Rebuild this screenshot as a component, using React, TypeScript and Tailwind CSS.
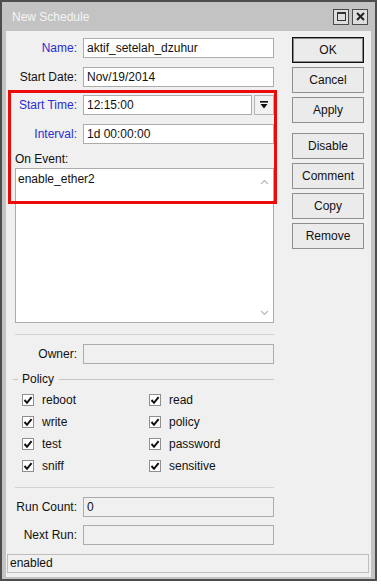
import React from 'react';

const font = { fontFamily: '"Liberation Sans", Arial, sans-serif' };

const Field = ({ label, value, blue, disabled, dropdown, className }: any) => {
  return (
    <div className={`flex items-center h-[20px] ${className || ''}`}>
      <div
        className={`w-[71px] text-right text-[12px] leading-[14px] ${
          blue ? 'text-[#2c2ccf]' : 'text-[#111]'
        }`}
      >
        {label}
      </div>
      <div className="ml-[6px] flex h-[20px]">
        <div
          className={`h-[20px] border border-[#acacac] pl-[3px] text-[12px] leading-[18px] text-[#111] ${
            disabled ? 'bg-[#f0f0f0]' : 'bg-white'
          } ${dropdown ? 'w-[169px]' : 'w-[191px]'}`}
        >
          {value}
        </div>
        {dropdown && (
          <div className="ml-[2px] w-[20px] h-[20px] border border-[#b4b4b4] bg-[#f2f2f2] flex items-center justify-center">
            <svg width="10" height="10" viewBox="0 0 10 10">
              <rect x="1" y="1" width="8" height="1.6" fill="#111" />
              <path d="M1.5 4 H8.5 L5 8.5 Z" fill="#111" />
            </svg>
          </div>
        )}
      </div>
    </div>
  );
};

const Btn = ({ label, primary, className }: any) => (
  <div
    className={`w-[72px] h-[26px] flex items-center justify-center text-[12px] text-[#111] bg-[#ebebeb] border ${
      primary ? 'border-[#111] shadow-[inset_0_0_0_1px_#8a8a8a]' : 'border-[#8e8e8e]'
    } ${className || ''}`}
  >
    {label}
  </div>
);

const Check = ({ label }: any) => (
  <div className="flex items-center h-[16px]">
    <div className="w-[12px] h-[12px] border border-[#8f8f8f] bg-white flex items-center justify-center">
      <svg width="10" height="10" viewBox="0 0 10 10">
        <path d="M1.5 5 L4 7.8 L8.6 2.2" stroke="#111" strokeWidth="2" fill="none" />
      </svg>
    </div>
    <div className="ml-[8px] text-[12px] leading-[14px] text-[#111]">{label}</div>
  </div>
);

const Sep = ({ className }: any) => (
  <div className={`ml-[9px] w-[259px] h-[1px] bg-[#d2d2d2] ${className || ''}`}></div>
);

export default function App() {
  return (
    <div className="w-[381px] h-[585px] bg-white" style={font}>
      <div className="w-[377px] h-[581px] border-2 border-[#4d4d4d] bg-[#c3c3c3] flex flex-col px-[4px] pb-[2px]">
        {/* title bar */}
        <div className="h-[29px] flex items-center justify-between pl-[6px] pr-[3px]">
          <div className="text-[12px] text-[#f5f5f5]">New Schedule</div>
          <div className="flex gap-[3px]">
            <div className="w-[16px] h-[16px] border-[1.5px] border-[#4a4a4a] bg-[#dedede] flex items-center justify-center">
              <div className="w-[9px] h-[9px] border border-[#333] border-t-2"></div>
            </div>
            <div className="w-[16px] h-[16px] border-[1.5px] border-[#4a4a4a] bg-[#dedede] flex items-center justify-center">
              <svg width="9" height="9" viewBox="0 0 9 9">
                <path d="M1 1 L8 8 M8 1 L1 8" stroke="#222" strokeWidth="2" />
              </svg>
            </div>
          </div>
        </div>

        {/* content */}
        <div className="relative flex-1 bg-[#f0f0f0] flex flex-col">
          <div className="flex">
            <div className="w-[286px] flex flex-col">
              <Field className="mt-[7px]" label="Name:" value="aktif_setelah_dzuhur" blue />
              <Field className="mt-[9px]" label="Start Date:" value="Nov/19/2014" />
              <Field className="mt-[8px]" label="Start Time:" value="12:15:00" blue dropdown />
              <Field className="mt-[9px]" label="Interval:" value="1d 00:00:00" blue />
              <div className="mt-[8px] ml-[9px] h-[14px] text-[12px] leading-[14px] text-[#111]">On Event:</div>
              <div className="mt-[2px] ml-[9px] w-[259px] h-[155px] border border-[#acacac] bg-white flex">
                <div className="flex-1 pl-[2px] pt-[3px] text-[12px] leading-[14px] text-[#111]">enable_ether2</div>
                <div className="w-[17px] flex flex-col items-center justify-between pt-[10px] pb-[6px]">
                  <svg width="9" height="6" viewBox="0 0 9 6">
                    <path d="M1 5 L4.5 1.5 L8 5" stroke="#b8b8b8" strokeWidth="1.2" fill="none" />
                  </svg>
                  <svg width="9" height="6" viewBox="0 0 9 6">
                    <path d="M1 1 L4.5 4.5 L8 1" stroke="#b8b8b8" strokeWidth="1.2" fill="none" />
                  </svg>
                </div>
              </div>
              <Sep className="mt-[11px]" />
              <Field className="mt-[9px]" label="Owner:" value="" disabled />
              <div className="mt-[8px] ml-[7px] w-[261px] h-[14px] flex items-center">
                <div className="w-[5px] h-[1px] bg-[#c4c4c4]"></div>
                <div className="ml-[4px] text-[12px] leading-[14px] text-[#111]">Policy</div>
                <div className="ml-[5px] flex-1 h-[1px] bg-[#c4c4c4]"></div>
              </div>
              <div className="mt-[6px] ml-[16px] grid grid-cols-[127px_1fr] gap-y-[6px]">
                <Check label="reboot" />
                <Check label="read" />
                <Check label="write" />
                <Check label="policy" />
                <Check label="test" />
                <Check label="password" />
                <Check label="sniff" />
                <Check label="sensitive" />
              </div>
              <Sep className="mt-[13px]" />
              <Field className="mt-[9px]" label="Run Count:" value="0" disabled />
              <Field className="mt-[8px]" label="Next Run:" value="" disabled />
            </div>

            <div className="flex flex-col pt-[6px]">
              <Btn label="OK" primary />
              <Btn label="Cancel" className="mt-[4px]" />
              <Btn label="Apply" className="mt-[4px]" />
              <Btn label="Disable" className="mt-[10px]" />
              <Btn label="Comment" className="mt-[4px]" />
              <Btn label="Copy" className="mt-[4px]" />
              <Btn label="Remove" className="mt-[4px]" />
            </div>
          </div>

          <div className="mt-[9px] ml-[1px] w-[362px] h-[19px] border border-[#bdbdbd] bg-[#f0f0f0] pl-[2px] text-[12px] leading-[17px] text-[#111]">
            enabled
          </div>

          {/* red highlight annotation */}
          <div className="absolute left-[2px] top-[59px] w-[269px] h-[114px] border-[3px] border-[#ec0b0b]"></div>
        </div>
      </div>
    </div>
  );
}
